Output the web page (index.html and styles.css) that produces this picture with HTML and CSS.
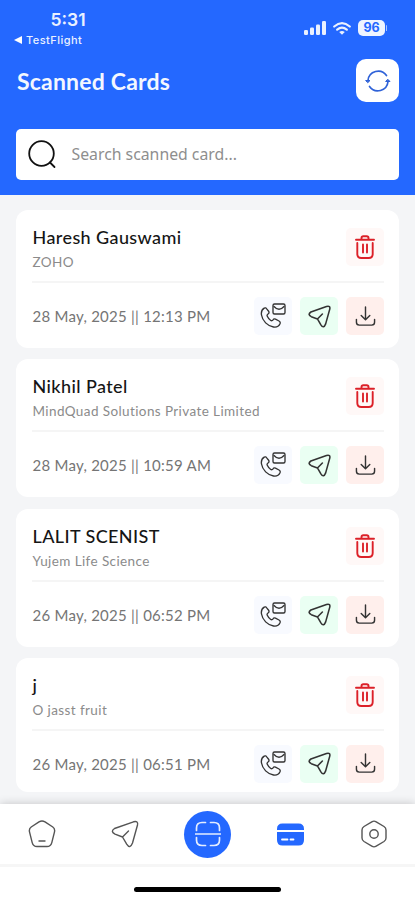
FILE: index.html
```html
<!DOCTYPE html>
<html lang="en">
  <head>
    <meta charset="UTF-8" />
    <meta name="viewport" content="width=device-width, initial-scale=1.0" />
    <title>Scanned Cards</title>
    <link rel="stylesheet" href="styles.css" />
  </head>
  <body>
    <!-- shared icons -->
    <svg class="sprite" width="0" height="0">
      <symbol id="icon-trash" viewBox="0 0 20 24">
        <path d="M1 4.800h18M6.500 4.500V3q0-1.800 1.800-1.800h3.400q1.800 0 1.800 1.800v1.500M2.300 8v11q0 4 4 4h7.400q4 0 4-4V8M8 9.500v8M12 9.500v8" />
      </symbol>
      <symbol id="icon-call" viewBox="0 0 26 26">
        <path d="M4.200 5.200C2 6.500 1 9 1.500 12c1 6 6 11 12 12 3 .5 5.500-1 6.500-3.200.5-1.200 0-2.200-1-2.800l-3.500-1.800c-1-.5-2-.2-2.500.6-.7 1-1.500 1.200-2.500.5-1.800-1.200-2.500-2.500-3.200-4-.5-1-.2-1.700.7-2.300 1-.6 1.200-1.500.8-2.500L6.700 5.800c-.5-1-1.500-1.200-2.500-.6z" />
        <rect x="13" y="1" width="12" height="10" rx="1.500" />
        <path d="M14 3.500q5 5.500 10 0" />
      </symbol>
      <symbol id="icon-send" viewBox="0 0 28 28">
        <path d="M3.500 8.500 22.500 1.800q5-1.300 4 3.200L21.500 23q-2.500 6.500-5.800 1.200L11.500 17 4 14.200q-5-2.700-.5-5.700zM11.500 17l6-6" />
      </symbol>
      <symbol id="icon-download" viewBox="0 0 22 22">
        <path d="M11 1v13M6.500 10l4.500 4.500 4.500-4.500M1.500 14v3q0 3 3 3h13q3 0 3-3v-3" />
      </symbol>
    </svg>

    <div class="app">
      <header class="header">
        <div class="status-bar">
          <div class="status-left">
            <div class="time">5:31</div>
            <div class="back-app"><span class="back-arrow"></span>TestFlight</div>
          </div>
          <div class="status-right">
            <svg class="signal" width="22" height="14" viewBox="0 0 22 14">
              <rect x="0" y="9" width="4" height="5" rx="1.300" />
              <rect x="6" y="6.500" width="4" height="7.500" rx="1.300" />
              <rect x="12" y="3.500" width="4" height="10.500" rx="1.300" />
              <rect x="18" y="0" width="4" height="14" rx="1.300" />
            </svg>
            <svg class="wifi" width="18" height="13" viewBox="0 0 18 13">
              <path d="M1.200 4.500q7.800-6.600 15.600 0M4.200 7.700q4.800-4 9.600 0" />
              <path class="dot" d="M9 12.800 6.200 10q2.800-2.200 5.600 0z" />
            </svg>
            <div class="battery">96</div>
          </div>
        </div>
        <div class="title-row">
          <h1>Scanned Cards</h1>
          <button class="refresh-btn" aria-label="Refresh">
            <svg width="26" height="26" viewBox="0 0 26 26">
              <path d="M3 12.500A10.200 10.200 0 0 1 21.500 7.500M23 13.500A10.200 10.200 0 0 1 4.500 18.500" />
              <path class="head" d="M1 12.500h4L3 14.500zM21 13.500h4L23 11.500z" />
            </svg>
          </button>
        </div>
        <div class="search-box">
          <svg width="29" height="29" viewBox="0 0 29 29">
            <circle cx="13.500" cy="13.500" r="12.300" />
            <path d="M22 22.500 26.500 27" />
          </svg>
          <input type="text" placeholder="Search scanned card..." />
        </div>
      </header>

      <main class="card-list" id="card-list"></main>

      <nav class="bottom-nav">
        <a class="nav-item">
          <svg width="28" height="28" viewBox="0 0 28 28">
            <path d="M11 1.800q3-1.600 6 0l7.800 5.200q2.400 1.800 1.700 4.800l-2.700 10.800q-1 3.900-4.800 3.900H9q-3.800 0-4.800-3.900L1.500 11.800q-.7-3 1.700-4.800zM11 21h6" />
          </svg>
        </a>
        <a class="nav-item">
          <svg width="28" height="28"><use href="#icon-send" /></svg>
        </a>
        <a class="nav-item scan">
          <svg width="26" height="26" viewBox="0 0 26 26">
            <path d="M1.500 9.500V7q0-5.500 5.500-5.500h3.500M15.500 1.500H19q5.500 0 5.500 5.500v2.500M1.500 16.500V19q0 5.500 5.500 5.500h3.500M15.500 24.500H19q5.500 0 5.500-5.500v-2.500M0 13h26" />
          </svg>
        </a>
        <a class="nav-item active">
          <svg width="27" height="23" viewBox="0 0 27 23">
            <path class="fill" d="M0 6q0-5.500 5.500-5.500h16Q27 .5 27 6v1H0zM0 9h27v8q0 5.500-5.500 5.500h-16Q0 22.500 0 17z" />
            <path class="mark" d="M5 16.500h5.500M13.500 16.500h3" />
          </svg>
        </a>
        <a class="nav-item">
          <svg width="26" height="28" viewBox="0 0 26 28">
            <path d="M10.800 1.800q2.200-1.300 4.400 0l7.800 4.700q2 1.300 2 3.500v8q0 2.200-2 3.500l-7.800 4.700q-2.200 1.300-4.400 0L3 21.500q-2-1.300-2-3.500v-8q0-2.200 2-3.500z" />
            <circle cx="13" cy="14" r="4.200" />
          </svg>
        </a>
      </nav>
      <div class="home-area"><div class="home-indicator"></div></div>
    </div>

    <script>
      const cards = [
        { name: "Haresh Gauswami", company: "ZOHO", date: "28 May, 2025 || 12:13 PM" },
        { name: "Nikhil Patel", company: "MindQuad Solutions Private Limited", date: "28 May, 2025 || 10:59 AM" },
        { name: "LALIT SCENIST", company: "Yujem Life Science", date: "26 May, 2025 || 06:52 PM" },
        { name: "j", company: "O jasst fruit", date: "26 May, 2025 || 06:51 PM" },
      ];

      document.getElementById("card-list").innerHTML = cards
        .map(
          (card) => `
        <article class="card">
          <div class="card-top">
            <div>
              <h2>${card.name}</h2>
              <p class="company">${card.company}</p>
            </div>
            <button class="icon-btn delete" aria-label="Delete">
              <svg width="20" height="24"><use href="#icon-trash" /></svg>
            </button>
          </div>
          <div class="card-bottom">
            <span class="date">${card.date}</span>
            <div class="actions">
              <button class="icon-btn call" aria-label="Call"><svg width="26" height="26"><use href="#icon-call" /></svg></button>
              <button class="icon-btn send" aria-label="Send"><svg width="23" height="23"><use href="#icon-send" /></svg></button>
              <button class="icon-btn download" aria-label="Download"><svg width="21" height="21"><use href="#icon-download" /></svg></button>
            </div>
          </div>
        </article>`
        )
        .join("");
    </script>
  </body>
</html>
```
FILE: styles.css
```css
* {
  box-sizing: border-box;
}

body {
  margin: 0;
  font-family: "Lato", sans-serif;
  background: #fff;
}

h1,
h2,
p {
  margin: 0;
}

button {
  border: none;
  padding: 0;
  cursor: pointer;
}

svg {
  display: block;
  fill: none;
  stroke: #444;
  stroke-width: 1.5;
  stroke-linecap: round;
  stroke-linejoin: round;
}

.sprite {
  position: absolute;
}

.app {
  height: 900px;
  display: flex;
  flex-direction: column;
  overflow: hidden;
}

/* header */
.header {
  height: 195px;
  flex-shrink: 0;
  background: #2468ff;
  padding: 0 16px;
}

.status-bar {
  height: 59px;
  display: flex;
  justify-content: space-between;
  color: #eaf1ff;
  font-family: "Inter", sans-serif;
}

.status-left {
  padding-top: 10px;
}

.time {
  font-size: 17.5px;
  font-weight: 600;
  line-height: 20px;
  padding-left: 34.5px;
}

.back-app {
  display: flex;
  align-items: center;
  gap: 4px;
  font-size: 11px;
  font-weight: 500;
  line-height: 14px;
  margin: 3px 0 0 -2px;
  letter-spacing: 0.45px;
}

.back-arrow {
  border: 4px solid transparent;
  border-right: 8px solid #fff;
  border-left: none;
}

.status-right {
  display: flex;
  align-items: center;
  height: 16px;
  margin-top: 20px;
  padding-right: 14px;
}

.signal,
.wifi .dot {
  fill: #eaf1ff;
  stroke: none;
}

.wifi {
  stroke: #eaf1ff;
  stroke-width: 2.2;
  margin: 0 7px;
}

.battery {
  position: relative;
  width: 27px;
  height: 16px;
  border-radius: 5px;
  background: #eef4ff;
  color: #2468ff;
  font-size: 12.5px;
  font-weight: 700;
  line-height: 16px;
  text-align: center;
}

.battery::after {
  content: "";
  position: absolute;
  right: -2px;
  top: 5px;
  width: 1.5px;
  height: 6px;
  border-radius: 1px;
  background: #a8c4ff;
}

.title-row {
  height: 43px;
  display: flex;
  align-items: center;
  justify-content: space-between;
}

h1 {
  color: #f3f7ff;
  font-size: 23px;
  font-weight: 700;
  line-height: 44px;
  letter-spacing: 0.2px;
  padding: 1px 0 0 1px;
}

.refresh-btn {
  width: 43px;
  height: 43px;
  border-radius: 10px;
  background: #fff;
  display: grid;
  place-items: center;
}

.refresh-btn svg {
  stroke: #2f62d8;
  stroke-width: 1.7;
}

.refresh-btn .head {
  fill: #2f62d8;
  stroke-width: 1;
}

.search-box {
  height: 51px;
  margin-top: 26.5px;
  padding: 0 12px;
  display: flex;
  align-items: center;
  gap: 14.5px;
  background: #fff;
  border-radius: 5px;
}

.search-box svg {
  stroke: #111;
  stroke-width: 1.8;
}

.search-box input {
  flex: 1;
  border: none;
  outline: none;
  padding: 0;
  background: none;
  font: 15.8px "Noto Sans", sans-serif;
}

.search-box input::placeholder {
  color: #8e8e8e;
}

/* cards */
.card-list {
  height: 609px;
  flex-shrink: 0;
  overflow: hidden;
  background: #f4f5f7;
  padding: 15px 16px 0;
  display: flex;
  flex-direction: column;
  gap: 11.3px;
}

.card {
  height: 138px;
  flex-shrink: 0;
  background: #fff;
  border-radius: 12px;
  padding: 18px 15px 0 16px;
}

.card:last-child {
  height: 134px;
}

.card-top {
  display: flex;
  justify-content: space-between;
  height: 55px;
  border-bottom: 2px solid #f5f5f5;
}

h2 {
  color: #151515;
  font-size: 18px;
  font-weight: 500;
  line-height: 22px;
  letter-spacing: 0.4px;
  margin: -2px 0 0 0.5px;
}

.company {
  color: #8b8b8b;
  font-size: 13.5px;
  line-height: 18px;
  letter-spacing: 0.4px;
  margin: 5px 0 0 0.5px;
}

.card-bottom {
  display: flex;
  align-items: center;
  justify-content: space-between;
  padding-top: 14px;
}

.date {
  color: #757575;
  font-size: 15px;
  letter-spacing: 0.25px;
  margin-left: 0.5px;
}

.actions {
  display: flex;
  gap: 8px;
}

.icon-btn {
  width: 38px;
  height: 38px;
  border-radius: 5px;
  display: grid;
  place-items: center;
}

.icon-btn svg {
  stroke: #333;
}

.icon-btn.delete {
  background: #fff8f7;
}

.icon-btn.delete svg {
  stroke: #dc2028;
  stroke-width: 1.9;
}

.icon-btn.call {
  background: #f8faff;
}

.icon-btn.call svg {
  stroke-width: 1.35;
}

.icon-btn.send {
  background: #eafff3;
}

.icon-btn.send svg {
  stroke-width: 1.9;
}

.icon-btn.download {
  background: #ffefec;
}

/* bottom navigation */
.bottom-nav {
  position: relative;
  height: 60px;
  flex-shrink: 0;
  display: grid;
  grid-template-columns: repeat(5, 83px);
  align-items: center;
  justify-items: center;
  background: #fff;
  box-shadow: 0 0 9px rgba(0, 0, 0, 0.2);
}

.nav-item svg {
  stroke: #555;
  stroke-width: 1.4;
}

.nav-item.scan {
  width: 47px;
  height: 47px;
  border-radius: 50%;
  background: #2468ff;
  display: grid;
  place-items: center;
}

.nav-item.scan svg {
  stroke: #e4edff;
  stroke-width: 1.7;
}

.nav-item .fill {
  fill: #2468ff;
  stroke: none;
}

.nav-item .mark {
  stroke: #fff;
  stroke-width: 1.8;
}

.home-area {
  position: relative;
  flex: 1;
  background: #fff;
  border-top: 3px solid #f6f6f6;
  padding-top: 19.5px;
}

.home-indicator {
  width: 147px;
  height: 5px;
  margin: 0 auto;
  border-radius: 3px;
  background: #000;
}
```
